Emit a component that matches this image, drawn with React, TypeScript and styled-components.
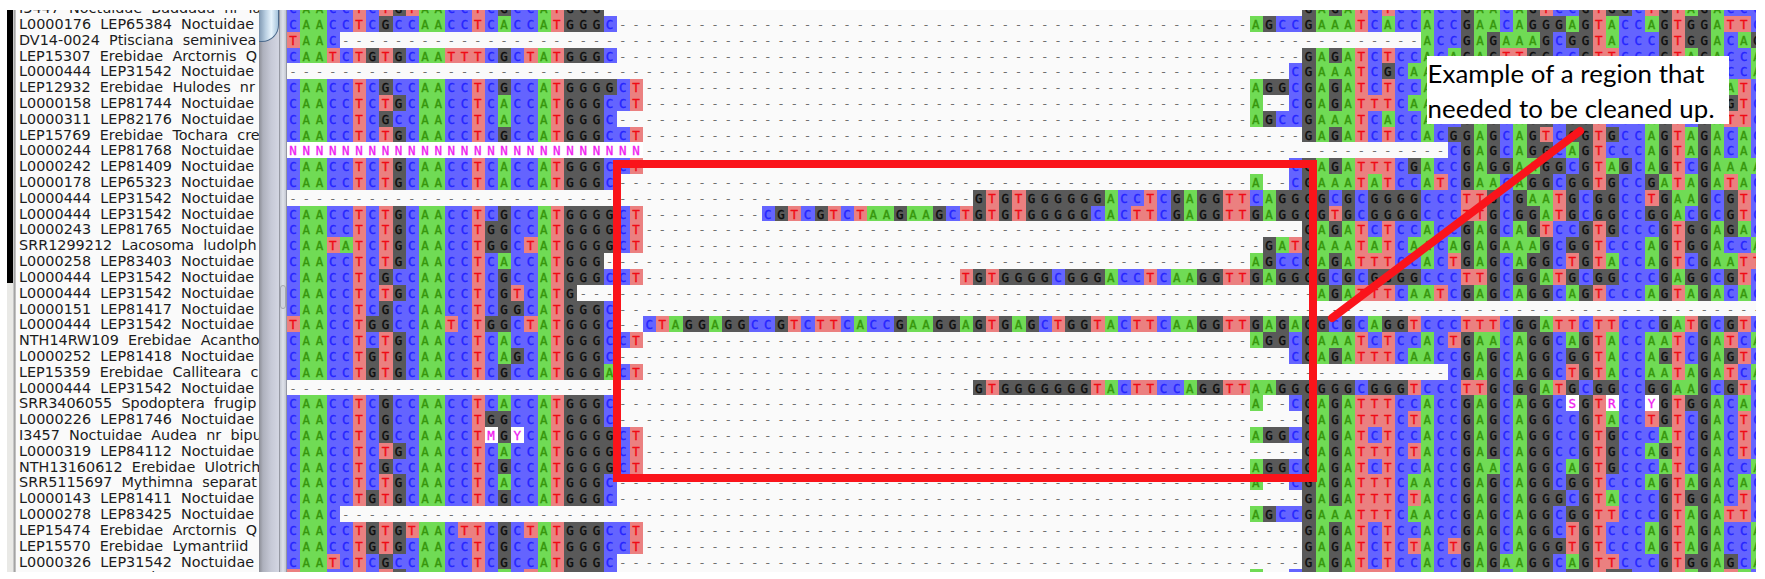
import React from "react";
import styled, { createGlobalStyle } from "styled-components";

const COLUMNS = 112;

type Entry = { name: string; runs: [number, string][] };

const e = (name: string, ...runs: [number, string][]): Entry => ({ name, runs });

const ENTRIES: Entry[] = [
  e("I3447 Noctuidae Baddada nr lac", [0, "CAACCTCTGTAACCTCGCCATGGG"], [77, "GAGATCTCCACCGAACAGTCCGTGGCTGTAGACCC"]),
  e("L0000176 LEP65384 Noctuidae", [0, "CAACCTCGCCAACCTCACCATGGGC"], [73, "AGCCGAAATCACCACCGAACAGGGAGTACCAGTGGATTC"]),
  e("DV14-0024 Ptisciana seminivea", [0, "TAAC"], [86, "ACCGAGAAAGCGGTACCCGTGGACAG"]),
  e("LEP15307 Erebidae Arctornis Q", [0, "CAATCTGTGCAATTTCGCTATGGGC"], [77, "GAGATCTCCACAGAGTTGGCCGTTCCCGTAGACCA"]),
  e("L0000444 LEP31542 Noctuidae", [76, "CGAAATCGCAACCGAGCAGGCGGTCCCAGTAGACCA"]),
  e("LEP12932 Erebidae Hulodes nr", [0, "CAACCTCGCCAACCTCGCCATGGGGCT"], [73, "AGGCGAGATCTCCACCGAGCAGGCCGTCCCAGTCGAATC"]),
  e("L0000158 LEP81744 Noctuidae", [0, "CAACCTCTGCAACCTCACCATGGGCCT"], [73, "A--CGAGATTTCAACCGAGCAGGCGGTCCCAGTCGAGTC"]),
  e("L0000311 LEP82176 Noctuidae", [0, "CAACCTCGCCAACCTCACCATGGGC"], [73, "AGCCGAAATCACCACCGAGCAGGCGGTCCCAGTCGATTC"]),
  e("LEP15769 Erebidae Tochara cre", [0, "CAACCTCTGCAACCTCGCCATGGGCCT"], [77, "GAGATCTCCACGGAGCAGTCGGTGCCAGTAGACAC"]),
  e("L0000244 LEP81768 Noctuidae", [0, "NNNNNNNNNNNNNNNNNNNNNNNNNNN"], [88, "CGAGCAGGCAGTCCCAGTAGACAC"]),
  e("L0000242 LEP81409 Noctuidae", [0, "CAACCTCTGCAACCTCACCATGGGCCT"], [76, "CGAGATTTCGACCGAGGAAGGCGTAGCAGTCGAAAA"]),
  e("L0000178 LEP65323 Noctuidae", [0, "CAACCTCTGCAACCTCACCATGGGC"], [73, "A--CGAAATATCCATCGAACAGGCGGTGCCGATAGATAC"]),
  e("L0000444 LEP31542 Noctuidae", [52, "GTGTGGGGGGACCTCGAGGTTCAGGGGCGCGGGGCCCTTGCGAATGCGGCCTGAAGCGTC"]),
  e("L0000444 LEP31542 Noctuidae", [0, "CAACCTCTGCAACCTCGCCATGGGGCT"], [36, "CGTCGTCTAAGAAGCTGTGTGGGGGCACTTCGAGGTTGAGGGGTGCGGGGCCCTTGCGGATGCGGCCGGACGCGTC"]),
  e("L0000243 LEP81765 Noctuidae", [0, "CAACCTCTGCAACCTGGCCATGGGGCT"], [77, "GAGATCTCCACCGAGCAGTCCGTGCCCGTGGAGAC"]),
  e("SRR1299212 Lacosoma ludolph", [0, "CAATATCTGCAACCTGGCTATGGGGCT"], [74, "GATGAAATATCAACAGAGAAAGCGGTCCCAGTGGACCA"]),
  e("L0000258 LEP83403 Noctuidae", [0, "CAACCTCTGCAACCTCACCATGGG"], [73, "AGCCGAGATTTCCACTGAGCAGGCTGTACCAGTCGAATT"]),
  e("L0000444 LEP31542 Noctuidae", [0, "CAACCTCGCCAACCTCGCCATGGGCCT"], [51, "TGTGGGGCGGGACCTCAAGGTTGAGGGGCGCGGGGCCCTTGCGGATGCGGCCCGAGGCGTC"]),
  e("L0000444 LEP31542 Noctuidae", [0, "CAACCTCTGCAACCTCGTCATG"], [78, "AGATTTCAATCGAGCAGGCAGTCCCAGTAGACAC"]),
  e("L0000151 LEP81417 Noctuidae", [0, "CAACCTCGCCAACCTCGGCATGGGC"]),
  e("L0000444 LEP31542 Noctuidae", [0, "TAACCTGGCCAATCTGGCTATGGGC"], [27, "CTAGGAGGCCGTCTTCACCGAAGGAGTGAGCTGGTACTTCAAGGTTGAGAGGCGCAGGTCCCTTTCGGATTCTTCCCGATGCGTC"]),
  e("NTH14RW109 Erebidae Acantho", [0, "CAACCTCTGCAACCTCACCATGGGCCT"], [73, "AGGCGAAATCTCCACTGAACAGGCAGTACCAATCGATCA"]),
  e("L0000252 LEP81418 Noctuidae", [0, "CAACCTGTGCAACCTCAGCATGGGC"], [76, "CGAGATTTCAACCGAGCAGGCGGTACCAGTCGAGTC"]),
  e("LEP15359 Erebidae Calliteara c", [0, "CAACCTGTGCAACCTCGCCATGGGACT"], [88, "CGAGCAGGCTGTACCAATAGATCA"]),
  e("L0000444 LEP31542 Noctuidae", [52, "GTGGGGGGGTACTTCCAGGTTAAGGGGGGCGGGTCCCTTGCGGATGCGGCCGGAAGCGTC"]),
  e("SRR3406055 Spodoptera frugip", [0, "CAACCTCGCCAACCTCACCATGGGC"], [73, "A--CGAGATTTCCACCGAGCAGGCSGTRCCYGTGGACAC"]),
  e("L0000226 LEP81746 Noctuidae", [0, "CAACCTCGCCAACCTGGCCATGGGC"], [77, "GAGATTTCTACCGAGCAGGCCGTACCTGTCGACTC"]),
  e("I3457 Noctuidae Audea nr bipu", [0, "CAACCTCGCCAACCTMGYCATGGGGCT"], [73, "AGGCGAGATCTCCACCGAGCAGGCCGTGCCCATCGACTC"]),
  e("L0000319 LEP84112 Noctuidae", [0, "CAACCTCTGCAACCTCACCATGGGGCT"], [77, "GAGATTTCTACCGAGCAGGCCGTGCCAGTCGACTC"]),
  e("NTH13160612 Erebidae Ulotrich", [0, "CAACCTCGCCAACCTCGCCATGGGGCT"], [73, "AGGCGAGATCTCCACCGAACAGGCAGTGCCCATCGACCA"]),
  e("SRR5115697 Mythimna separat", [0, "CAACCTCTGCAACCTCACCATGGGC"], [73, "A--CGAGATTTCAACCGAGCAGGCGGTCCCAGTAGACAC"]),
  e("L0000143 LEP81411 Noctuidae", [0, "CAACCTGTGCAACCTCGCCATGGGC"], [77, "GAGATTTCTACCGAGCAGGGCGTACCCGTGGACTC"]),
  e("L0000278 LEP83425 Noctuidae", [0, "CAAC"], [73, "AGCCGAAATTTCAACCGAGCAGGCGGTTCCCGTAGATTC"]),
  e("LEP15474 Erebidae Arctornis Q", [0, "CAACCTGTGTAACTTCGCTATGGGCCT"], [77, "GAGATCTCCACCGAGCAGGCTGTCCCAGTAGACCA"]),
  e("LEP15570 Erebidae Lymantriid", [0, "CAACCTGTGCAACCTCGCCATGGGCCT"], [77, "GAGATCTCTACTGAGCAGGGTGTCCCAGTAGACCA"]),
  e("L0000326 LEP31542 Noctuidae", [0, "CAATCTCGCCAACCTCGCCATGGGC"], [77, "GAGATCTCCACCGAGAAGGCAGTTCCCGTGGAGCA"]),
  e("SRR136905 Agrotis segetum", [0, "TAACCTCTGCAACCTCACTATGGGC"], [73, "A--CGAGATTTCCACCGAGCAGGCGGTGGCCGTAGATAC"]),
];

const sequence = (runs: [number, string][]) => {
  const cells = Array<string>(COLUMNS).fill("-");
  runs.forEach(([start, bases]) => {
    [...bases].forEach((base, i) => {
      if (start + i < COLUMNS) cells[start + i] = base;
    });
  });
  return cells;
};

const PALETTE: Record<string, [string, string]> = {
  A: ["#70db55", "#36960c"],
  C: ["#6464ff", "#2424ff"],
  G: ["#595959", "#0c0c0c"],
  T: ["#eb8080", "#f00a14"],
  "-": ["#fafafa", "#707070"],
};
const AMBIGUOUS: [string, string] = ["#ffffff", "#f01cf0"];
const paint = (base: string) => PALETTE[base] ?? AMBIGUOUS;

const GlobalStyle = createGlobalStyle`
  body { margin: 0; background: #fff; overflow: hidden; }
  *, *::before, *::after { box-sizing: border-box; }
`;

const Page = styled.main`
  position: relative;
  width: 1765px;
  height: 579px;
  padding: 10px 9px 7px 7px;
  background: #fff;
`;

const Viewer = styled.div`
  display: flex;
  width: 1749px;
  height: 562px;
  overflow: hidden;
`;

const Edge = styled.div`
  flex: none;
  width: 6px;
  background: linear-gradient(#000 0 273px, #e9e9e6 273px);
`;

const EdgeBorder = styled.div`
  flex: none;
  width: 3px;
  background: linear-gradient(90deg, #d8d8d8, #999 60%, #ddd);
`;

const NameList = styled.div`
  flex: none;
  width: 243px;
  overflow: hidden;
  padding-left: 3px;
  background: #fafafa;
`;

const Rows = styled.div`
  margin-top: -9.9px;
`;

const Name = styled.div`
  height: 15.82px;
  font: 14.4px/16.4px "DejaVu Sans", sans-serif;
  word-spacing: 4.6px;
  color: #1c1c1c;
  white-space: pre;
`;

const ScrollTrack = styled.div`
  flex: none;
  width: 20px;
  background: linear-gradient(90deg, #8b8d95, #aeb1bd 20%, #c6c9d6 60%, #d3d6e2);
`;

const ScrollThumb = styled.div`
  width: 20px;
  height: 32px;
  border: solid #4c6a8c;
  border-width: 0 1.5px 1.5px 0;
  border-radius: 0 0 17px 0;
  background: linear-gradient(90deg, #7f98b2, #b9cfe2 35%, #e6f3fc 65%, #a6c4dc);
`;

const Divider = styled.div`
  flex: none;
  display: flex;
  flex-direction: column;
  justify-content: flex-start;
  width: 8px;
  border: solid #9699a3;
  border-width: 0 1px 0 1px;
  background: linear-gradient(90deg, #c4c8d2, #dfe2ea 50%, #c4c7d1);
`;

const Grip = styled.div`
  height: 24px;
  margin-top: 275px;
  border: 1px solid #a4a7b0;
  border-radius: 3px;
  background: #d0d3dd;
`;

const Alignment = styled.div`
  flex: none;
  width: 1469px;
  overflow: hidden;
  background: #fafafa;
`;

const SequenceRow = styled.div`
  display: flex;
  height: 15.82px;
`;

const Base = styled.span<{ $base: string }>`
  flex: none;
  width: 13.2px;
  height: 15.82px;
  background: ${(p) => paint(p.$base)[0]};
  color: ${(p) => paint(p.$base)[1]};
  font: 12.5px/17px "DejaVu Sans Mono", monospace;
  -webkit-text-stroke: ${(p) => (p.$base === "-" ? "0" : "0.35px currentColor")};
  text-align: center;
  text-indent: -1px;
`;

const Markup = styled.svg`
  position: absolute;
  left: 0;
  top: 0;
`;

const Note = styled.div`
  position: absolute;
  left: 1427px;
  top: 56px;
  width: 302px;
  height: 68px;
  padding-left: 0.5px;
  background: #fff;
  color: #000;
  font: 25.8px/34.5px Lato, sans-serif;
  letter-spacing: 0.1px;
  white-space: nowrap;
`;

export default function App() {
  return (
    <Page>
      <GlobalStyle />
      <Viewer>
        <Edge />
        <EdgeBorder />
        <NameList>
          <Rows>
            {ENTRIES.map((entry, i) => (
              <Name key={i}>{entry.name}</Name>
            ))}
          </Rows>
        </NameList>
        <ScrollTrack>
          <ScrollThumb />
        </ScrollTrack>
        <Divider>
          <Grip />
        </Divider>
        <Alignment>
          <Rows>
            {ENTRIES.map((entry, i) => (
              <SequenceRow key={i}>
                {sequence(entry.runs).map((base, j) => (
                  <Base key={j} $base={base}>
                    {base}
                  </Base>
                ))}
              </SequenceRow>
            ))}
          </Rows>
        </Alignment>
      </Viewer>
      <Markup width="1765" height="579" viewBox="0 0 1765 579" fill="none" stroke="#fa141b" strokeWidth="8">
        <rect x="617" y="164" width="696" height="314" />
        <path d="M1332 318 1580 131" strokeLinecap="round" />
      </Markup>
      <Note>
        Example of a region that
        <br />
        needed to be cleaned up.
      </Note>
    </Page>
  );
}
